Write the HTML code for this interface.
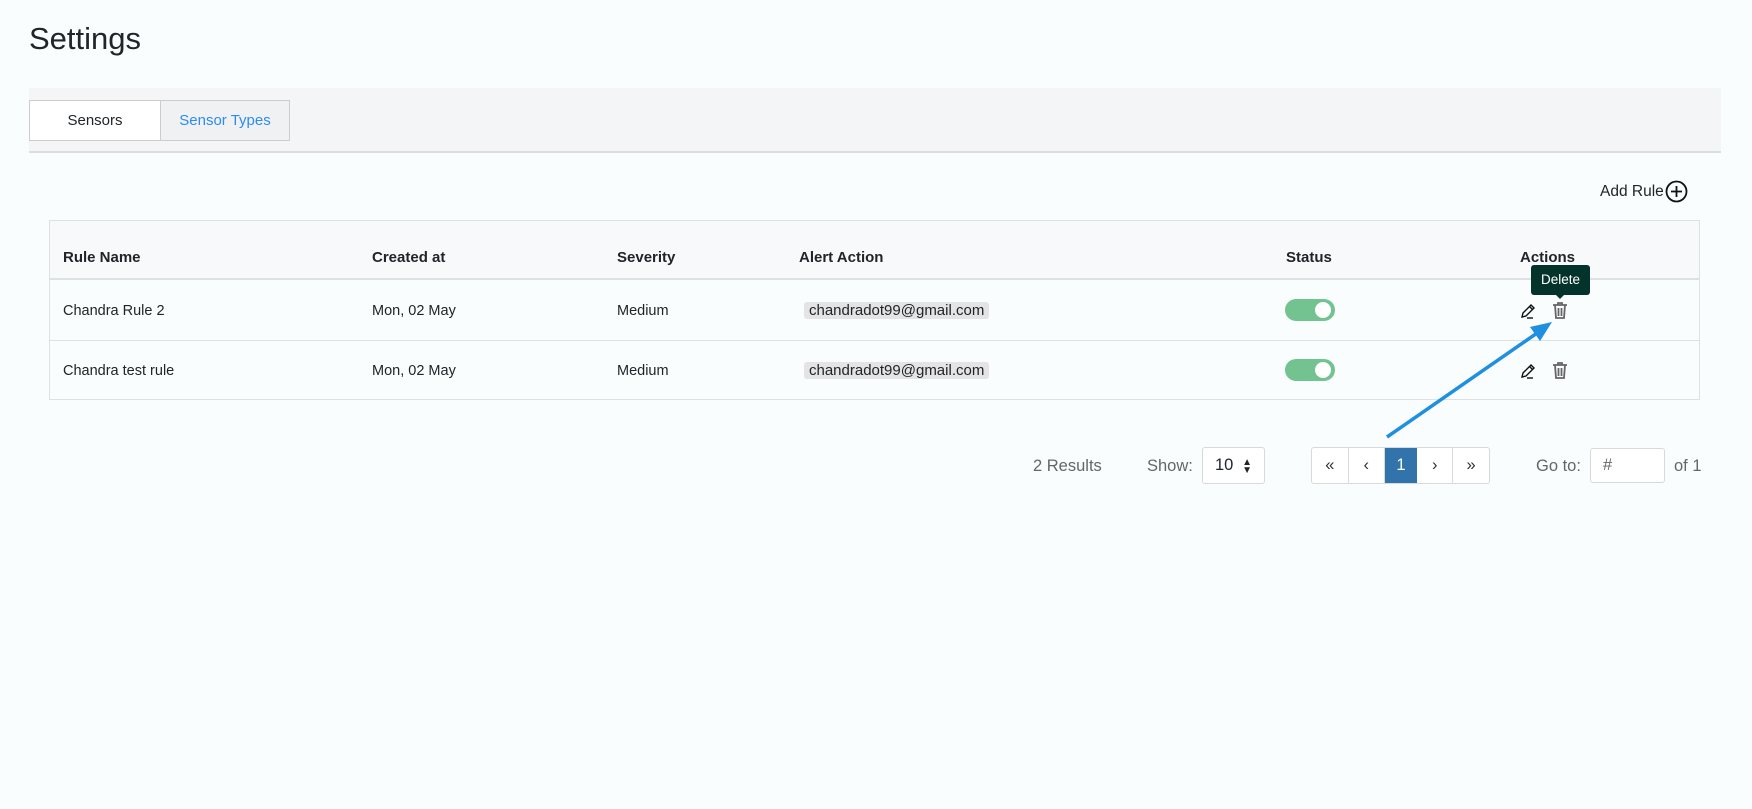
<!DOCTYPE html>
<html><head><meta charset="utf-8"><style>
*{box-sizing:border-box;margin:0;padding:0}
body{width:1752px;height:809px;background:#f9fdfe;font-family:"Liberation Sans",sans-serif;color:#212529;position:relative;overflow:hidden}
.a{position:absolute;white-space:nowrap}
.h{font-size:31px;left:29px;top:21px;font-weight:400}
.bar{left:29px;top:88px;width:1692px;height:65px;background:#f4f5f6;border-bottom:2px solid #ddd}
.tab{top:100px;height:41px;border:1px solid #ccc;font-size:15px;line-height:39px;text-align:center}
.tbl{left:49px;top:220px;width:1651px;height:180px;border:1px solid #dde1e3;background:#f9fdfe}
.th{font-weight:bold;font-size:15px;top:249px}
.td{font-size:14.5px}
.chip{background:#e4e4e4;border-radius:3px;padding:0 5px;font-size:15px;line-height:17px}
.tog{width:50px;height:22px;border-radius:11px;background:#72c38f}
.tog:after{content:"";position:absolute;right:4px;top:3px;width:16px;height:16px;border-radius:50%;background:#fff}
.pg{font-size:16.5px;color:#666}
.box{border:1px solid #d6dadd;background:#fff;border-radius:3px}
</style></head><body>
<div class="a h">Settings</div>
<div class="a bar"></div>
<div class="a tab" style="left:29px;width:132px;background:#fff">Sensors</div>
<div class="a tab" style="left:160px;width:130px;background:#f0f1f2;color:#2d8cf0">Sensor Types</div>
<div class="a" style="left:1600px;top:183px;font-size:15.5px">Add Rule</div>
<svg class="a" style="left:1665px;top:180px" width="23" height="23" viewBox="0 0 23 23"><circle cx="11.5" cy="11.5" r="10" fill="none" stroke="#111" stroke-width="1.8"/><path d="M11.5 6v11M6 11.5h11" stroke="#111" stroke-width="1.8"/></svg>
<div class="a tbl"><div style="position:absolute;left:0;top:0;width:100%;height:59px;background:#f7f9fa;border-bottom:2px solid #dde1e3"></div><div style="position:absolute;left:0;top:119px;width:100%;border-top:1px solid #dde1e3"></div></div>
<div class="a th" style="left:63px">Rule Name</div>
<div class="a th" style="left:372px">Created at</div>
<div class="a th" style="left:617px">Severity</div>
<div class="a th" style="left:799px">Alert Action</div>
<div class="a th" style="left:1286px">Status</div>
<div class="a th" style="left:1520px">Actions</div>
<div class="a td" style="left:63px;top:303px">Chandra Rule 2</div>
<div class="a td" style="left:372px;top:303px">Mon, 02 May</div>
<div class="a td" style="left:617px;top:303px">Medium</div>
<div class="a chip" style="left:804px;top:302px">chandradot99@gmail.com</div>
<div class="a tog" style="left:1285px;top:299px"></div>
<div class="a td" style="left:63px;top:363px">Chandra test rule</div>
<div class="a td" style="left:372px;top:363px">Mon, 02 May</div>
<div class="a td" style="left:617px;top:363px">Medium</div>
<div class="a chip" style="left:804px;top:362px">chandradot99@gmail.com</div>
<div class="a tog" style="left:1285px;top:359px"></div>
<svg width="0" height="0" style="position:absolute"><defs>
<g id="ed"><path d="M3 15l1-4 8-8 3 3-8 8z M10.5 4.5l3 3" fill="none" stroke="#111" stroke-width="1.4"/><path d="M8 16h6" stroke="#111" stroke-width="1.4"/></g>
<g id="tr"><path d="M2 4h14M7 4V2h4v2M4 4l1 13h8l1-13M7.5 7v8M10.5 7v8" fill="none" stroke="#666" stroke-width="1.8"/></g>
</defs></svg>
<svg class="a" style="left:1519px;top:302px" width="18" height="18"><use href="#ed"/></svg>
<svg class="a" style="left:1551px;top:301px" width="18" height="19"><use href="#tr"/></svg>
<svg class="a" style="left:1519px;top:362px" width="18" height="18"><use href="#ed"/></svg>
<svg class="a" style="left:1551px;top:361px" width="18" height="19"><use href="#tr"/></svg>
<div class="a" style="left:1531px;top:265px;width:59px;height:30px;background:#04332b;border-radius:3px;color:#fff;font-size:13.5px;line-height:30px;text-align:center">Delete</div>
<div class="a" style="left:1555px;top:294px;border:5px solid transparent;border-top-color:#04332b"></div>
<svg class="a" style="left:0;top:0" width="1752" height="809"><path d="M1387 437L1540 331" stroke="#1f8fdf" stroke-width="3.5"/><path d="M1552 322l-22 5 10 14z" fill="#1f8fdf"/></svg>
<div class="a pg" style="left:1033px;top:457px">2 Results</div>
<div class="a pg" style="left:1147px;top:457px">Show:</div>
<div class="a box" style="left:1202px;top:447px;width:63px;height:37px;font-size:16.5px;line-height:35px;padding-left:12px">10<span style="position:absolute;right:12px;font-size:10px;line-height:8px;top:11px">▲<br>▼</span></div>
<div class="a box" style="left:1311px;top:447px;width:179px;height:37px;display:flex;font-size:16.5px;line-height:35px;text-align:center;color:#333">
<div style="width:37px;border-right:1px solid #d6dadd">«</div><div style="width:36px;border-right:1px solid #d6dadd">‹</div><div style="width:33px;background:#3273ab;color:#fff">1</div><div style="width:36px;border-right:1px solid #d6dadd">›</div><div style="width:36px">»</div></div>
<div class="a pg" style="left:1536px;top:457px">Go to:</div>
<div class="a box" style="left:1590px;top:448px;width:75px;height:35px;font-size:16.5px;line-height:33px;padding-left:12px;color:#666">#</div>
<div class="a pg" style="left:1674px;top:457px">of 1</div>
</body></html>
